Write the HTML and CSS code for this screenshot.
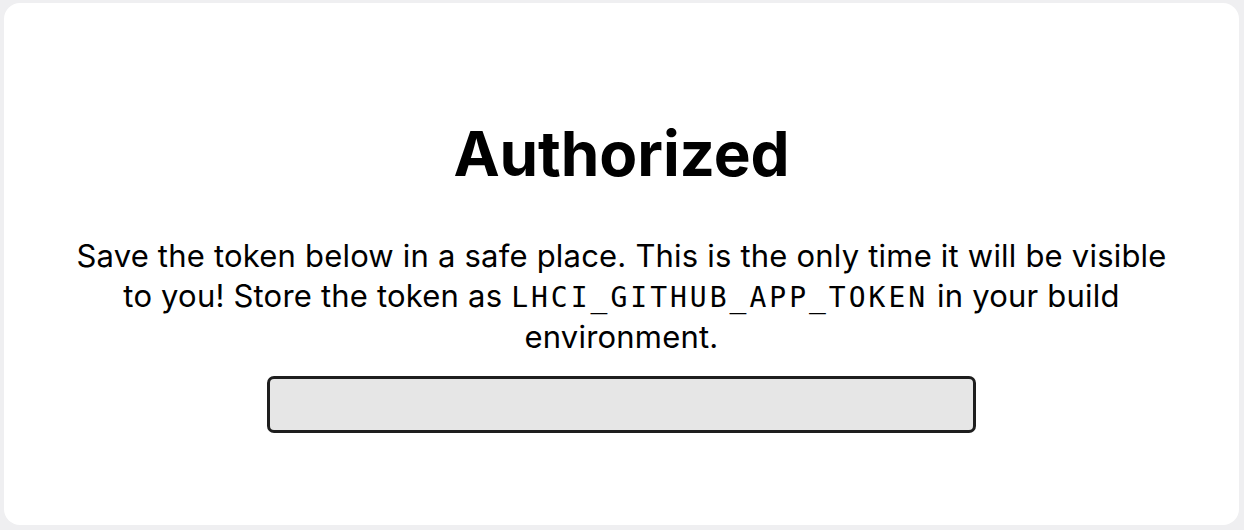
FILE: index.html
```html
<!DOCTYPE html>
<html>
<head>
<meta charset="utf-8">
<link rel="stylesheet" href="styles.css">
</head>
<body>
<div class="card">
  <h1 class="title">Authorized</h1>
  <p class="message">Save the token below in a safe place. This is the only time it will be visible to you! Store the token as <code class="mono">LHCI_GITHUB_APP_TOKEN</code> in your build environment.</p>
  <input class="token" type="text" value="" readonly>
</div>
</body>
</html>
```

FILE: styles.css
```css
html, body {
  margin: 0;
  padding: 0;
  background: #efeff1;
}
body {
  padding: 3px 5px 5px 4px;
  height: 530px;
  box-sizing: border-box;
  font-family: Inter, "Noto Sans", sans-serif;
  color: #000;
}
.card {
  background: #fff;
  border-radius: 16px;
  height: 100%;
  box-sizing: border-box;
  display: flex;
  flex-direction: column;
  align-items: center;
  padding: 113px 40px 0;
}
.title {
  margin: 0;
  font-size: 62px;
  font-weight: 700;
  line-height: 76px;
  letter-spacing: -0.1px;
}
.message {
  margin: 44px 0 0;
  font-size: 31px;
  line-height: 39.5px;
  letter-spacing: 0.2px;
  text-align: center;
  max-width: 1095px;
}
.mono {
  font-family: "DejaVu Sans Mono", monospace;
  font-size: 28px;
  letter-spacing: 3px;
}
.token {
  margin-top: 19px;
  width: 709px;
  height: 57px;
  box-sizing: border-box;
  border: 3px solid #1e1e1e;
  border-radius: 7px;
  background: #e6e6e6;
  outline: none;
}
```
